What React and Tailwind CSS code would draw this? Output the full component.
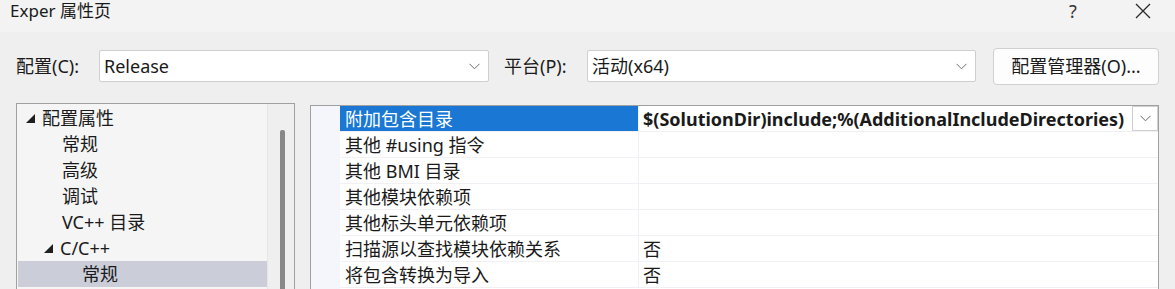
import React from "react";

const FONT = { fontFamily: '"Noto Sans", "Noto Sans CJK SC", sans-serif' };

function Chevron({ className = "" }) {
  return (
    <svg width="11" height="7" viewBox="0 0 11 7" className={className}>
      <polyline points="0.5,0.8 5.5,5.8 10.5,0.8" fill="none" stroke="#6b6b6b" strokeWidth="1" />
    </svg>
  );
}

function Tri() {
  return (
    <svg width="9" height="9" viewBox="0 0 9 9" className="shrink-0">
      <polygon points="0,9 9,9 9,0" fill="#1f1f1f" />
    </svg>
  );
}

function Combo({ value, w }) {
  return (
    <div className={`${w} h-[32px] bg-white border border-[#cfcfcf] rounded-[2px] flex items-center pl-[4px] pr-[8px]`}>
      <span className="flex-1 text-[18px] text-[#1a1a1a] leading-[24px]">{value}</span>
      <Chevron />
    </div>
  );
}

const treeRows = [
  { text: "配置属性", indent: "pl-[8px]", tri: true },
  { text: "常规", indent: "pl-[44px]" },
  { text: "高级", indent: "pl-[44px]" },
  { text: "调试", indent: "pl-[44px]" },
  { text: "VC++ 目录", indent: "pl-[44px]" },
  { text: "C/C++", indent: "pl-[26px]", tri: true },
  { text: "常规", indent: "pl-[64px]", sel: true },
];

const props = [
  { name: "附加包含目录", value: "$(SolutionDir)include;%(AdditionalIncludeDirectories)", sel: true },
  { name: "其他 #using 指令", value: "" },
  { name: "其他 BMI 目录", value: "" },
  { name: "其他模块依赖项", value: "" },
  { name: "其他标头单元依赖项", value: "" },
  { name: "扫描源以查找模块依赖关系", value: "否" },
  { name: "将包含转换为导入", value: "否" },
];

export default function App() {
  return (
    <div className="w-[1175px] h-[289px] overflow-hidden bg-[#efefef] text-[#1a1a1a] flex flex-col" style={FONT}>
      {/* title bar */}
      <div className="h-[32px] shrink-0 bg-[#f3f3f3] flex items-center pl-[10px]">
        <span className="text-[17px] leading-[22px] text-[#1a1a1a] flex-1 -mt-[10px]">Exper 属性页</span>
        <span className="text-[18px] leading-[22px] text-[#333] w-[20px] text-center -mt-[10px] mr-[52px]">?</span>
        <svg width="16" height="16" viewBox="0 0 16 16" className="mr-[24px] -mt-[10px]">
          <path d="M1 1 L15 15 M15 1 L1 15" stroke="#2a2a2a" strokeWidth="1.3" />
        </svg>
      </div>

      {/* config row */}
      <div className="h-[36px] mt-[16px] shrink-0 flex items-center">
        <span className="w-[99px] pl-[16px] text-[18px] leading-[24px]">配置(C):</span>
        <Combo value="Release" w="w-[390px]" />
        <span className="w-[98px] pl-[15px] text-[18px] leading-[24px]">平台(P):</span>
        <Combo value="活动(x64)" w="w-[389px]" />
        <button className="ml-[17px] w-[166px] h-[37px] bg-[#fdfdfd] border border-[#d0d0d0] rounded-[4px] text-[18px] leading-[24px] text-[#1a1a1a] flex items-center justify-center">
          配置管理器(O)...
        </button>
      </div>

      {/* main */}
      <div className="flex-1 mt-[19px] flex items-start min-h-0">
        {/* tree */}
        <div className="ml-[16px] w-[279px] h-[200px] border border-[#a0a0a0] bg-[#f5f5f5] flex">
          <div className="flex-1 pt-[1px] pl-[1px]">
            {treeRows.map((r, i) => (
              <div
                key={i}
                className={`h-[26px] flex items-center gap-[7px] ${r.indent} ${r.sel ? "bg-[#cbcdd9]" : ""}`}
              >
                {r.tri && <Tri />}
                <span className="text-[18px] leading-[24px]">{r.text}</span>
              </div>
            ))}
          </div>
          <div className="w-[27px] border-l border-[#e6e6e6] bg-[#efefef] pt-[26px] flex justify-center">
            <div className="w-[5px] h-[200px] bg-[#888888] rounded-t-[2px] ml-[2px]" />
          </div>
        </div>

        {/* properties */}
        <div className="ml-[15px] mt-[2px] w-[849px] h-[200px] border border-[#a0a0a0] bg-[#f4f6fb] flex">
          <div className="w-[29px] shrink-0" />
          <div className="flex-1 bg-white">
            {props.map((p, i) => (
              <div key={i} className="h-[26px] flex border-b border-[#f0f0f5]">
                <div
                  className={`w-[298px] shrink-0 flex items-center pl-[5px] text-[18px] leading-[24px] ${
                    p.sel ? "bg-[#1a77d4] text-white" : ""
                  }`}
                >
                  {p.name}
                </div>
                <div className="flex-1 flex items-center pl-[4px] border-l border-[#f0f0f5] min-w-0">
                  <span className={`flex-1 text-[18px] leading-[24px] whitespace-nowrap ${p.sel ? "font-bold" : ""}`}>
                    {p.value}
                  </span>
                  {p.sel && (
                    <div className="w-[26px] h-[25px] shrink-0 border border-[#cfcfcf] bg-white flex items-center justify-center">
                      <Chevron />
                    </div>
                  )}
                </div>
              </div>
            ))}
          </div>
        </div>
      </div>
    </div>
  );
}
